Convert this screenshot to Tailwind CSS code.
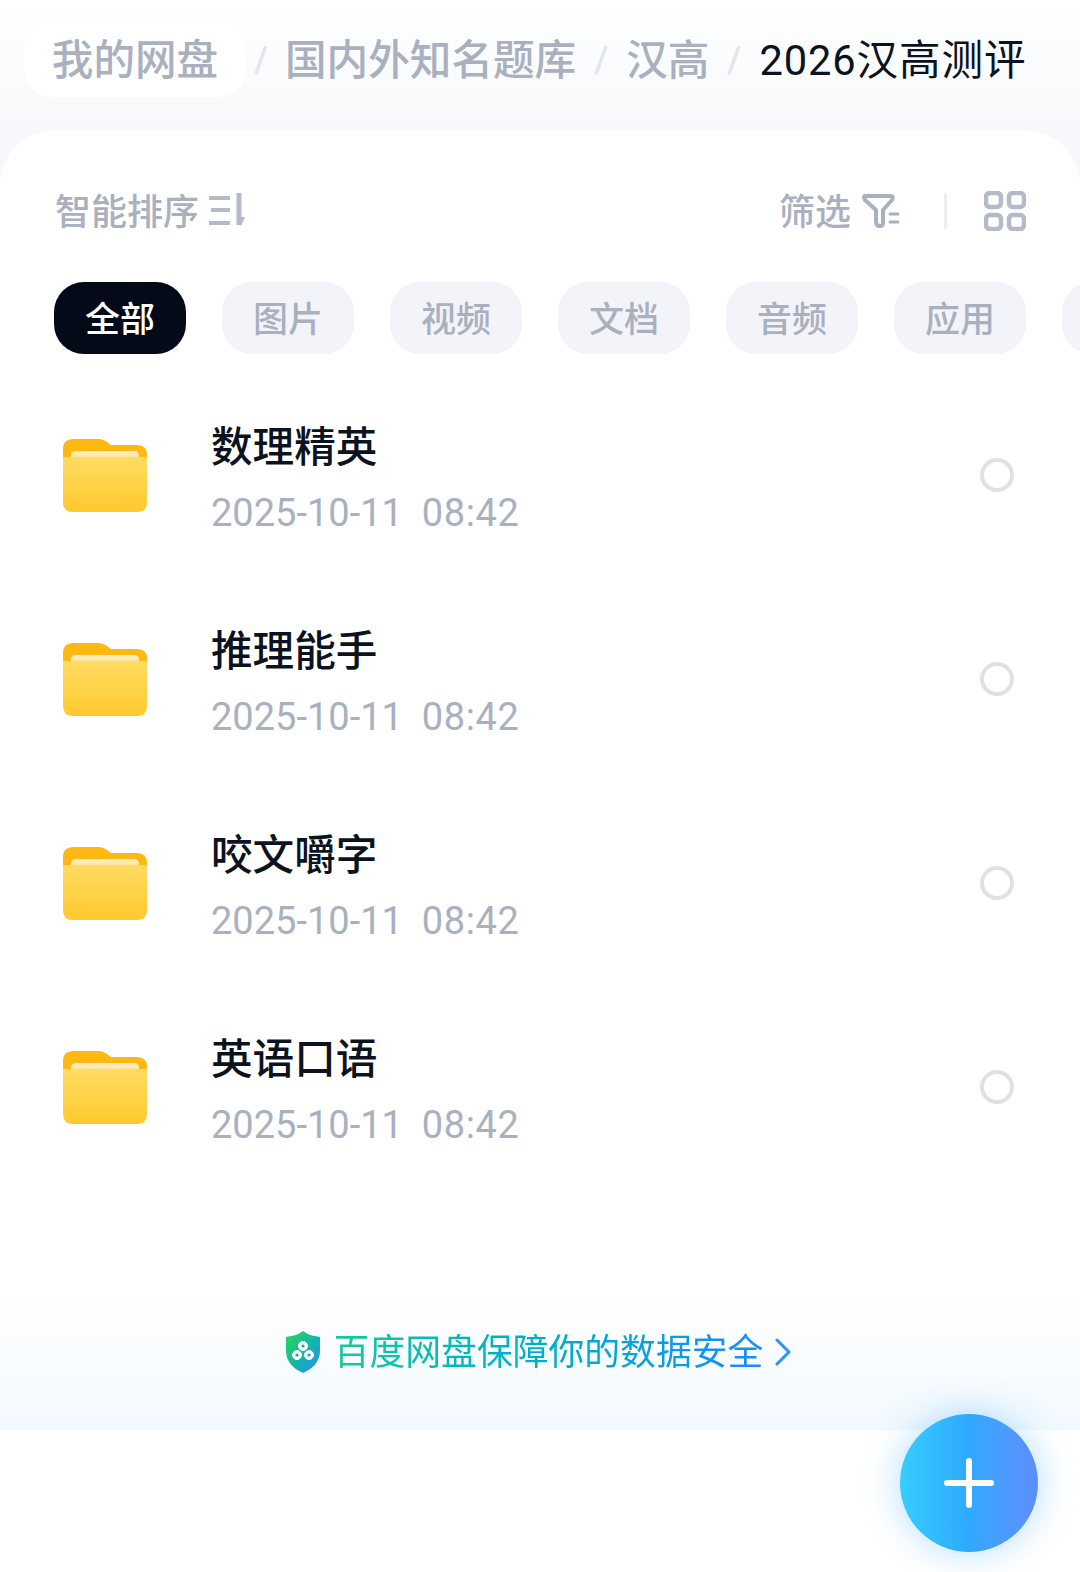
<!DOCTYPE html>
<html lang="zh-CN">
<head>
    <meta charset="UTF-8" />
    <meta name="viewport" content="width=device-width, initial-scale=1.0" />
    <title>我的网盘</title>
    <script src="https://cdn.jsdelivr.net/npm/@tailwindcss/browser@4"></script>
</head>
<body class="relative w-[1080px] h-[1572px] overflow-hidden bg-white font-['Roboto','Noto_Sans_CJK_SC',sans-serif]">

    <svg width="0" height="0" class="absolute">
        <defs>
            <linearGradient id="folderFront" x1="0" y1="0" x2="0" y2="1">
                <stop offset="0" stop-color="#ffdc62" />
                <stop offset="1" stop-color="#ffc92e" />
            </linearGradient>
            <linearGradient id="folderPaper" x1="0" y1="0" x2="0" y2="1">
                <stop offset="0" stop-color="#ffeec2" />
                <stop offset="1" stop-color="#ffe28a" />
            </linearGradient>
            <linearGradient id="shieldFill" x1="0" y1="0" x2="1" y2="1">
                <stop offset="0" stop-color="#2fd651" />
                <stop offset="0.5" stop-color="#12b8a6" />
                <stop offset="1" stop-color="#2a8cf7" />
            </linearGradient>
            <symbol id="folder" viewBox="0 0 84 73">
                <path d="M0 10 Q0 0 10 0 H36 Q40 0 44 3 L48 6 H74 Q84 6 84 16 V30 H0 Z" fill="#ffb812" />
                <path d="M8 17 Q8 12 13 12 H71 Q76 12 76 17 V22 H8 Z" fill="url(#folderPaper)" />
                <path d="M0 18 H84 V63 Q84 73 74 73 H10 Q0 73 0 63 Z" fill="url(#folderFront)" />
            </symbol>
        </defs>
    </svg>

    <!-- breadcrumb -->
    <header class="h-[130px] pt-[22px] pl-6 bg-linear-to-b from-white to-[#f6f8fb]">
        <nav class="flex items-center h-[75px] text-[41.6px] leading-none text-[#a9b0c0] font-medium whitespace-nowrap">
            <span class="w-[222px] h-[75px] pt-[3px] flex items-center justify-center rounded-[28px] bg-white">我的网盘</span>
            <span class="w-[39px] pl-2 text-[#e2e5ec] text-[36px]">/</span>
            <span class="pt-[3px]">国内外知名题库</span>
            <span class="w-[50px] text-center text-[#e2e5ec] text-[36px]">/</span>
            <span class="pt-[3px]">汉高</span>
            <span class="w-[50px] text-center text-[#e2e5ec] text-[36px]">/</span>
            <span class="pt-[3px] tracking-[0.9px] font-normal text-[#0b1220]">2026汉高测评</span>
        </nav>
    </header>

    <main class="bg-[#f6f8fb]">
        <div class="h-[1442px] bg-white rounded-t-[56px] pt-[58px]">
            <!-- sort and filter -->
            <div class="flex items-center justify-between h-[46px] pl-[55px] pr-[54px] text-[36px] leading-none text-[#a9b0c0] font-medium">
                <div class="flex items-center gap-[9px]">
                    <span class="pt-[4px]">智能排序</span>
                    <svg width="38" height="36" viewBox="0 0 38 36" fill="none" stroke="#b4bac8" stroke-width="4">
                        <path d="M1 5 H22 M3 17 H22 M1 30 H22" />
                        <path d="M31 0 V32" stroke-width="5" />
                        <path d="M33 24 L37 24 L33 33 Z" fill="#b4bac8" stroke="none" />
                    </svg>
                </div>
                <div class="flex items-center">
                    <span class="pt-[4px]">筛选</span>
                    <svg class="ml-[11px]" width="38" height="34" viewBox="0 0 38 34" fill="none" stroke="#a9b0c0" stroke-width="4" stroke-linejoin="round" stroke-linecap="round">
                        <path d="M3 2 H29 Q32 2 30 6 L21 16 V29 Q21 32 18 32 Q14 32 14 28 V16 L3 6 Q1 2 3 2 Z" />
                        <path d="M28 20 H36 M28 28 H36" stroke-width="3" />
                    </svg>
                    <div class="w-[3px] h-[36px] ml-[44px] mr-[37px] bg-[#eef0f4]"></div>
                    <svg width="42" height="40" viewBox="0 0 42 40" fill="none" stroke="#b4bac8" stroke-width="4.5">
                        <rect x="2" y="2" width="15" height="14" rx="4" />
                        <rect x="25" y="2" width="15" height="14" rx="4" />
                        <rect x="2" y="24" width="15" height="14" rx="4" />
                        <rect x="25" y="24" width="15" height="14" rx="4" />
                    </svg>
                </div>
            </div>

            <!-- type tabs -->
            <div class="flex gap-9 mt-[48px] ml-[54px] overflow-hidden text-[35px] leading-none text-[#a9b0c0] font-medium">
                <span class="flex-none flex items-center justify-center w-[132px] h-[72px] pt-[4px] rounded-[30px] bg-[#040a18] text-white">全部</span>
                <span class="flex-none flex items-center justify-center w-[132px] h-[72px] pt-[4px] rounded-[30px] bg-[#f2f4f9]">图片</span>
                <span class="flex-none flex items-center justify-center w-[132px] h-[72px] pt-[4px] rounded-[30px] bg-[#f2f4f9]">视频</span>
                <span class="flex-none flex items-center justify-center w-[132px] h-[72px] pt-[4px] rounded-[30px] bg-[#f2f4f9]">文档</span>
                <span class="flex-none flex items-center justify-center w-[132px] h-[72px] pt-[4px] rounded-[30px] bg-[#f2f4f9]">音频</span>
                <span class="flex-none flex items-center justify-center w-[132px] h-[72px] pt-[4px] rounded-[30px] bg-[#f2f4f9]">应用</span>
                <span class="flex-none flex items-center justify-center w-[132px] h-[72px] pt-[4px] rounded-[30px] bg-[#f2f4f9]"></span>
            </div>

            <!-- folders -->
            <ul class="mt-[19px]">
                <li class="flex items-center h-[204px] pl-[63px] pr-[66px]">
                    <svg class="flex-none" width="84" height="73"><use href="#folder" /></svg>
                    <div class="flex-1 ml-[64px] pt-[10px]">
                        <div class="text-[41.6px] leading-[50px] font-medium text-[#0b1220]">数理精英</div>
                        <div class="mt-[15px] text-[38px] leading-[50px] text-[#a9b0c0] whitespace-pre">2025-10-11  <span class="tracking-[0.6px]">08:42</span></div>
                    </div>
                    <span class="flex-none w-[34px] h-[34px] rounded-full border-[4px] border-[#dfe1e5]"></span>
                </li>
                <li class="flex items-center h-[204px] pl-[63px] pr-[66px]">
                    <svg class="flex-none" width="84" height="73"><use href="#folder" /></svg>
                    <div class="flex-1 ml-[64px] pt-[10px]">
                        <div class="text-[41.6px] leading-[50px] font-medium text-[#0b1220]">推理能手</div>
                        <div class="mt-[15px] text-[38px] leading-[50px] text-[#a9b0c0] whitespace-pre">2025-10-11  <span class="tracking-[0.6px]">08:42</span></div>
                    </div>
                    <span class="flex-none w-[34px] h-[34px] rounded-full border-[4px] border-[#dfe1e5]"></span>
                </li>
                <li class="flex items-center h-[204px] pl-[63px] pr-[66px]">
                    <svg class="flex-none" width="84" height="73"><use href="#folder" /></svg>
                    <div class="flex-1 ml-[64px] pt-[10px]">
                        <div class="text-[41.6px] leading-[50px] font-medium text-[#0b1220]">咬文嚼字</div>
                        <div class="mt-[15px] text-[38px] leading-[50px] text-[#a9b0c0] whitespace-pre">2025-10-11  <span class="tracking-[0.6px]">08:42</span></div>
                    </div>
                    <span class="flex-none w-[34px] h-[34px] rounded-full border-[4px] border-[#dfe1e5]"></span>
                </li>
                <li class="flex items-center h-[204px] pl-[63px] pr-[66px]">
                    <svg class="flex-none" width="84" height="73"><use href="#folder" /></svg>
                    <div class="flex-1 ml-[64px] pt-[10px]">
                        <div class="text-[41.6px] leading-[50px] font-medium text-[#0b1220]">英语口语</div>
                        <div class="mt-[15px] text-[38px] leading-[50px] text-[#a9b0c0] whitespace-pre">2025-10-11  <span class="tracking-[0.6px]">08:42</span></div>
                    </div>
                    <span class="flex-none w-[34px] h-[34px] rounded-full border-[4px] border-[#dfe1e5]"></span>
                </li>
            </ul>

            <!-- safety notice -->
            <div class="flex items-center justify-center h-[140px] mt-[101px] pb-4 pr-[4px] bg-linear-to-b from-white to-[#f2f9fe]">
                <svg class="flex-none" width="36" height="42" viewBox="0 0 36 42">
                    <path d="M18 0 C23 4 29 5 35 6 V20 C35 31 27 38 18 42 C9 38 1 31 1 20 V6 C7 5 13 4 18 0 Z" fill="url(#shieldFill)" />
                    <g fill="white" stroke="white" stroke-width="1">
                        <circle cx="18" cy="15" r="4.5" />
                        <circle cx="12" cy="24" r="4.5" />
                        <circle cx="24" cy="24" r="4.5" />
                    </g>
                    <g fill="#13a9a9">
                        <circle cx="18" cy="15" r="1.6" />
                        <circle cx="12" cy="24" r="1.6" />
                        <circle cx="24" cy="24" r="1.6" />
                    </g>
                </svg>
                <span class="ml-[13px] pt-[3px] text-[35.8px] leading-none text-transparent bg-clip-text bg-linear-to-r from-[#17c99a] to-[#1c8cf5]">百度网盘保障你的数据安全</span>
                <svg class="flex-none ml-[12px]" width="16" height="28" viewBox="0 0 16 28" fill="none" stroke="#2b95f6" stroke-width="3" stroke-linecap="round" stroke-linejoin="round">
                    <path d="M2 2 L14 14 L2 26" />
                </svg>
            </div>
        </div>
    </main>

    <!-- add button -->
    <button class="absolute left-[900px] top-[1414px] flex items-center justify-center w-[138px] h-[138px] rounded-full bg-linear-to-r from-[#38cdfd] via-[#2fa9ff] to-[#5b8dfb] shadow-[0_0_36px_rgba(60,170,255,0.4)]">
        <svg width="50" height="50" viewBox="0 0 50 50" stroke="white" stroke-width="6" stroke-linecap="round">
            <path d="M3 25 H47 M25 3 V47" />
        </svg>
    </button>
</body>
</html>
